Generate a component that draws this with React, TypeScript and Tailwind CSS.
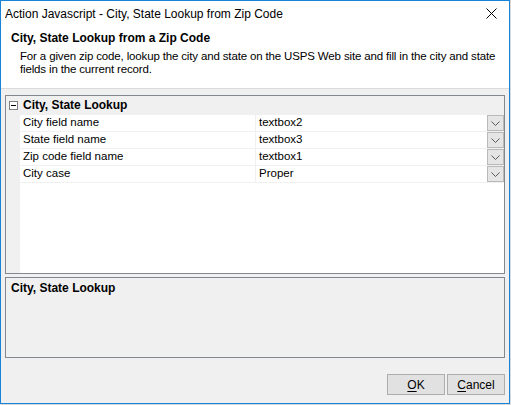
import React from "react";

const rows = [
  { label: "City field name", value: "textbox2" },
  { label: "State field name", value: "textbox3" },
  { label: "Zip code field name", value: "textbox1" },
  { label: "City case", value: "Proper" },
];

const Chevron = () => (
  <svg width="9" height="5" viewBox="0 0 9 5" className="block">
    <path d="M0.5 0.5 L4.5 4.5 L8.5 0.5" fill="none" stroke="#5a5a5a" strokeWidth="1" />
  </svg>
);

const App: React.FC = () => {
  return (
    <div className="w-[511px] h-[405px] bg-[#d9d9d9] font-['Liberation_Sans',Arial,sans-serif] text-black">
      <div className="w-[510px] h-[404px] border border-[#1883d7] bg-[#f0f0f0] flex flex-col">
        {/* header */}
        <div className="bg-white h-[88px] border-b border-[#dadada] shrink-0">
          <div className="h-[25px] flex items-center justify-between pl-[4px] pr-[12px]">
            <span className="text-[12px]">Action Javascript - City, State Lookup from Zip Code</span>
            <svg width="11" height="11" viewBox="0 0 11 11">
              <path d="M0.5 0.5 L10.5 10.5 M10.5 0.5 L0.5 10.5" stroke="#000" strokeWidth="1" />
            </svg>
          </div>
          <div className="pl-[10px] mt-[4px] text-[12px] font-bold leading-[16px]">City, State Lookup from a Zip Code</div>
          <div className="pl-[19px] mt-[4px] text-[11.5px] leading-[13px] tracking-[-0.15px] whitespace-nowrap">
            For a given zip code, lookup the city and state on the USPS Web site and fill in the city and state
            <br />
            fields in the current record.
          </div>
        </div>

        {/* property grid */}
        <div className="mx-[4px] mt-[6px] h-[179px] border border-[#828790] bg-white flex flex-col text-[11.5px]">
          <div className="h-[18px] bg-[#f0f0f0] flex items-center shrink-0">
            <div className="w-[14px] flex justify-center">
              <div className="w-[9px] h-[9px] border border-[#808080] bg-white flex items-center justify-center">
                <div className="w-[5px] h-px bg-black" />
              </div>
            </div>
            <span className="pl-[3px] font-bold text-[12px]">City, State Lookup</span>
          </div>
          {rows.map((r) => (
            <div key={r.label} className="h-[17px] flex shrink-0">
              <div className="w-[14px] bg-[#f0f0f0]" />
              <div className="flex-1 flex border-t border-[#f0f0f0]">
                <div className="w-[236px] border-r border-[#f0f0f0] pl-[3px] flex items-center">{r.label}</div>
                <div className="flex-1 pl-[3px] flex items-center justify-between">
                  <span>{r.value}</span>
                  <div className="w-[17px] h-[16px] bg-[#e5e5e5] border border-[#b9b9b9] flex items-center justify-center">
                    <Chevron />
                  </div>
                </div>
              </div>
            </div>
          ))}
          <div className="flex-1 flex">
            <div className="w-[14px] bg-[#f0f0f0]" />
            <div className="flex-1 border-t border-[#f0f0f0]" />
          </div>
        </div>

        {/* description */}
        <div className="mx-[4px] mt-[3px] h-[81px] border border-[#828790] bg-[#f0f0f0] px-[5px] pt-[1px] text-[12px] font-bold">
          City, State Lookup
        </div>

        {/* buttons */}
        <div className="mt-[16px] flex justify-end gap-[2px] pr-[4px] text-[12px]">
          <button className="w-[58px] h-[21px] bg-[#e1e1e1] border border-[#adadad]">
            <span className="underline underline-offset-2">O</span>K
          </button>
          <button className="w-[58px] h-[21px] bg-[#e1e1e1] border border-[#adadad]">
            <span className="underline underline-offset-2">C</span>ancel
          </button>
        </div>
      </div>
    </div>
  );
};

export default App;
